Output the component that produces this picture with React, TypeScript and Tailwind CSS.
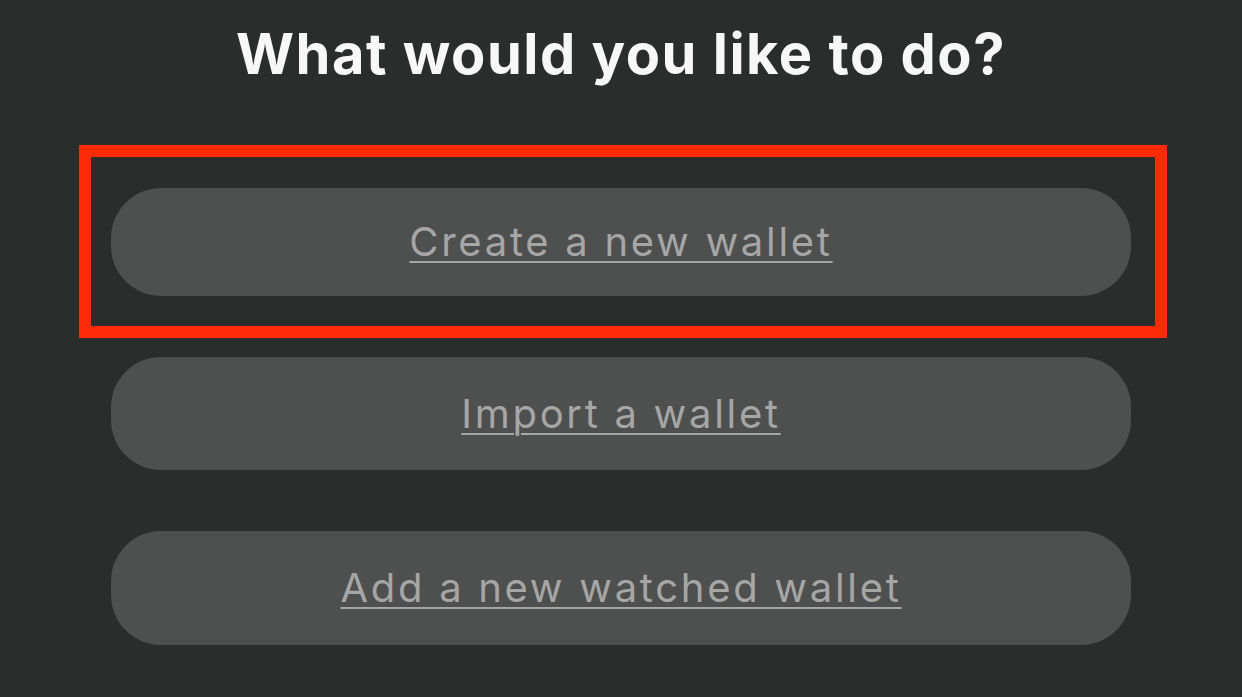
import React from 'react';

const options = [
  { label: 'Create a new wallet', height: 'h-[108px]', highlighted: true },
  { label: 'Import a wallet', height: 'h-[113px]', highlighted: false },
  { label: 'Add a new watched wallet', height: 'h-[114px]', highlighted: false },
];

function OptionButton({ label, height }: { label: string; height: string }) {
  return (
    <button
      className={`w-full ${height} rounded-[50px] bg-[#4e4f4f] flex items-center justify-center`}
    >
      <span className="text-[40px] leading-none text-[#a5a6a5] underline underline-offset-[5px] decoration-2 tracking-[2.7px]">
        {label}
      </span>
    </button>
  );
}

export default function App() {
  return (
    <div
      className="w-[1242px] h-[697px] bg-[#2b2c2c] overflow-hidden flex flex-col items-center"
      style={{ fontFamily: 'Inter, "Noto Sans", sans-serif' }}
    >
      <h1 className="mt-[22px] text-[56px] leading-[64px] font-bold text-[#f7f7f7] tracking-[1.5px]">
        What would you like to do?
      </h1>

      <div className="mt-[102px] w-full px-[111px] flex flex-col gap-[61px]">
        {options.map((opt) =>
          opt.highlighted ? (
            <div key={opt.label} className="relative">
              <OptionButton label={opt.label} height={opt.height} />
              {/* highlight frame around the selected action */}
              <div className="absolute top-[-43px] bottom-[-42px] left-[-32px] right-[-36px] border-[12px] border-[#ff2a08] pointer-events-none" />
            </div>
          ) : (
            <OptionButton key={opt.label} label={opt.label} height={opt.height} />
          )
        )}
      </div>
    </div>
  );
}
